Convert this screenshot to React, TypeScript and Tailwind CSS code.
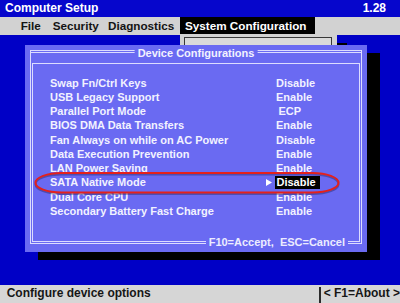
const rows: { label: string; value: string; selected?: boolean; indent?: boolean }[] = [
  { label: 'Swap Fn/Ctrl Keys', value: 'Disable' },
  { label: 'USB Legacy Support', value: 'Enable' },
  { label: 'Parallel Port Mode', value: 'ECP', indent: true },
  { label: 'BIOS DMA Data Transfers', value: 'Enable' },
  { label: 'Fan Always on while on AC Power', value: 'Disable' },
  { label: 'Data Execution Prevention', value: 'Enable' },
  { label: 'LAN Power Saving', value: 'Enable' },
  { label: 'SATA Native Mode', value: 'Disable', selected: true },
  { label: 'Dual Core CPU', value: 'Enable' },
  { label: 'Secondary Battery Fast Charge', value: 'Enable' },
];

export default function App() {
  return (
    <div className="flex h-[303px] w-[400px] flex-col overflow-hidden font-['Liberation_Sans',Arial,sans-serif] font-bold">
      {/* Title bar */}
      <div className="flex h-[17px] items-start justify-between bg-[#0606cc] pl-[5px] pr-[14px] text-[12px] leading-[16px] text-white">
        <span>Computer Setup</span>
        <span>1.28</span>
      </div>

      {/* Menu bar */}
      <div className="flex h-[18px] items-start bg-[#d2d2d2] pl-[20.7px] text-[11.7px] leading-[18px] text-[#141414]">
        <span className="w-[32px]">File</span>
        <span className="w-[55.3px]">Security</span>
        <span className="w-[72px]">Diagnostics</span>
        <span className="h-[17px] w-[135px] bg-black pl-[5px] leading-[17px] text-white">
          System Configuration
        </span>
      </div>

      {/* Desktop */}
      <div className="relative flex-1 bg-[#0000c6]">
        {/* dropdown left behind the dialog */}
        <div className="absolute left-[190px] top-[8px] h-[10px] w-[157px] bg-black" />
        <div className="absolute left-[180px] top-[-1px] h-[12px] w-[157px] bg-[#d2d2d2]">
          <div className="ml-[4px] mt-[3px] h-[10px] w-[148px] border border-b-0 border-[#383838] bg-[#dadada]" />
        </div>

        {/* Dialog */}
        <div className="relative ml-[25px] mt-[10px] h-[207px] w-[342px] bg-[#6a6af2] px-[5px] pb-[8px] pt-[5px] shadow-[13px_8px_0_0_#000]">
          <div className="relative flex h-[194px] flex-col border border-[#dcdcff]">
            <div className="mt-[1px] h-[1px] bg-[#dcdcff]" />
            <div className="absolute left-1/2 top-[-4px] -translate-x-1/2 bg-[#6a6af2] px-[3px] text-[11px] leading-[12px] whitespace-nowrap text-[#f2f2ff]">
              Device Configurations
            </div>

            <div className="mx-[1px] mb-[1px] mt-[10px] flex-1 border border-[#dcdcff] pl-[17px] pt-[11.5px] text-[11px] text-[#f2f2ff]">
              {rows.map((row) => (
                <div key={row.label} className="grid h-[14.26px] grid-cols-[216px_9px_1fr] items-center leading-[12px]">
                  <span className="whitespace-nowrap">{row.label}</span>
                  <span className="flex items-center">
                    {row.selected && (
                      <svg width="6" height="7" viewBox="0 0 6 7">
                        <polygon points="0,0 6,3.5 0,7" fill="#ffffff" />
                      </svg>
                    )}
                  </span>
                  <span>
                    <span
                      className={
                        row.selected
                          ? 'inline-block h-[12.5px] bg-black pl-[1.5px] pr-[4px] leading-[12.5px] text-white'
                          : row.indent
                            ? 'inline-block pl-[3.5px]'
                            : 'inline-block pl-[1px]'
                      }
                    >
                      {row.value}
                    </span>
                  </span>
                </div>
              ))}
            </div>

            <div className="absolute bottom-[-5px] right-[13px] bg-[#6a6af2] px-[3px] text-[11px] leading-[12px] whitespace-nowrap text-[#ececff]">
              F10=Accept,&nbsp; ESC=Cancel
            </div>
          </div>

          {/* red highlight around the selected row */}
          <svg className="pointer-events-none absolute left-0 top-0" width="342" height="207">
            <rect x="10.5" y="129.5" width="303" height="19.5" rx="26" ry="10" fill="none" stroke="rgba(20,20,60,0.35)" strokeWidth="2" />
            <rect x="10.5" y="128" width="303" height="19.5" rx="26" ry="10" fill="none" stroke="#e4201c" strokeWidth="2" />
          </svg>
        </div>
      </div>

      {/* Status bar */}
      <div className="flex h-[18px] items-start bg-[#d6d6d6] text-[12px] leading-[16px] text-[#161616]">
        <span className="w-[321px] pl-[6.7px]">Configure device options</span>
        <span className="mt-[2px] h-[16px] w-[1.5px] bg-[#2a2a2a]" />
        <span className="pl-[3px] whitespace-nowrap">&lt; F1=About &gt;</span>
      </div>
    </div>
  );
}
